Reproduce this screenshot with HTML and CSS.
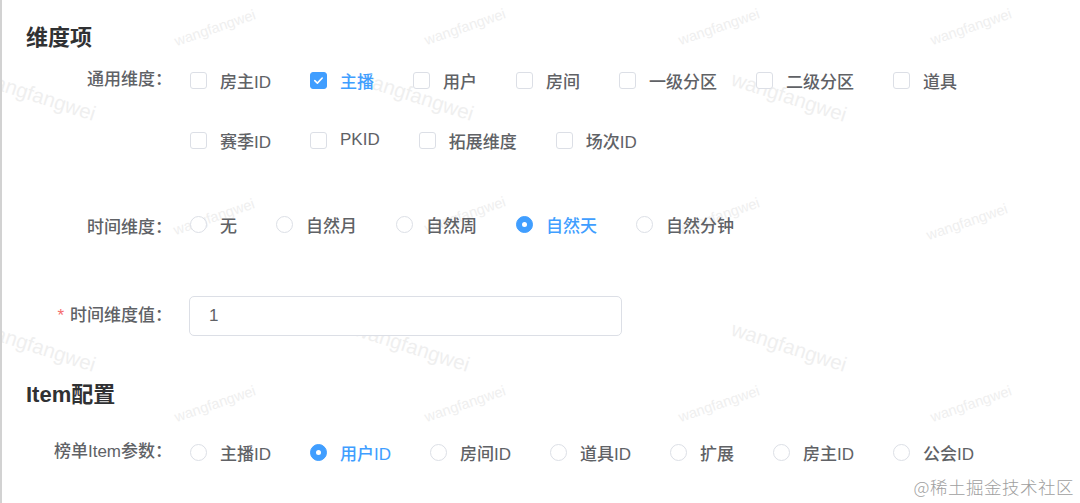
FILE: index.html
```html
<!DOCTYPE html>
<html lang="zh-CN">
<head>
<meta charset="utf-8">
<title>维度项</title>
<link rel="stylesheet" href="styles.css">
</head>
<body>
<div class="page">
  <div class="watermarks" aria-hidden="true">
    <span class="wm up" style="left:213px;top:28px">wangfangwei</span>
    <span class="wm up" style="left:463px;top:27px">wangfangwei</span>
    <span class="wm up" style="left:717px;top:27px">wangfangwei</span>
    <span class="wm up" style="left:969px;top:27px">wangfangwei</span>
    <span class="wm down" style="left:36px;top:96px">wangfangwei</span>
    <span class="wm down" style="left:414px;top:96px">wangfangwei</span>
    <span class="wm down" style="left:787px;top:97px">wangfangwei</span>
    <span class="wm up" style="left:212px;top:217px">wangfangwei</span>
    <span class="wm up" style="left:463px;top:215px">wangfangwei</span>
    <span class="wm up" style="left:717px;top:216px">wangfangwei</span>
    <span class="wm up" style="left:965px;top:222px">wangfangwei</span>
    <span class="wm down" style="left:36px;top:347px">wangfangwei</span>
    <span class="wm down" style="left:410px;top:347px">wangfangwei</span>
    <span class="wm down" style="left:787px;top:347px">wangfangwei</span>
    <span class="wm up" style="left:213px;top:404px">wangfangwei</span>
    <span class="wm up" style="left:463px;top:404px">wangfangwei</span>
    <span class="wm up" style="left:717px;top:404px">wangfangwei</span>
    <span class="wm up" style="left:969px;top:404px">wangfangwei</span>
  </div>

  <div class="content">
    <h2 class="section-title title-first">维度项</h2>

    <div class="form-item">
      <div class="label">通用维度：</div>
      <div class="group checkbox-group">
        <label class="opt"><span class="cb"></span><span class="txt">房主ID</span></label>
        <label class="opt checked"><span class="cb"><svg viewBox="0 0 17 17" width="17" height="17"><polyline points="4.8,8.6 7.4,11.1 12.2,6" fill="none" stroke="#fff" stroke-width="1.6" stroke-linecap="round" stroke-linejoin="round"/></svg></span><span class="txt">主播</span></label>
        <label class="opt"><span class="cb"></span><span class="txt">用户</span></label>
        <label class="opt"><span class="cb"></span><span class="txt">房间</span></label>
        <label class="opt"><span class="cb"></span><span class="txt">一级分区</span></label>
        <label class="opt"><span class="cb"></span><span class="txt">二级分区</span></label>
        <label class="opt"><span class="cb"></span><span class="txt">道具</span></label>
        <label class="opt"><span class="cb"></span><span class="txt">赛季ID</span></label>
        <label class="opt"><span class="cb"></span><span class="txt">PKID</span></label>
        <label class="opt"><span class="cb"></span><span class="txt">拓展维度</span></label>
        <label class="opt"><span class="cb"></span><span class="txt">场次ID</span></label>
      </div>
    </div>

    <div class="form-item row-time">
      <div class="label label-low">时间维度：</div>
      <div class="group">
        <label class="opt"><span class="rd"></span><span class="txt">无</span></label>
        <label class="opt"><span class="rd"></span><span class="txt">自然月</span></label>
        <label class="opt"><span class="rd"></span><span class="txt">自然周</span></label>
        <label class="opt checked"><span class="rd"></span><span class="txt">自然天</span></label>
        <label class="opt"><span class="rd"></span><span class="txt">自然分钟</span></label>
      </div>
    </div>

    <div class="form-item row-input">
      <div class="label"><span class="req">*</span>时间维度值：</div>
      <div class="input-wrap"><div class="input">1</div></div>
    </div>

    <h2 class="section-title title-item">Item配置</h2>

    <div class="form-item row-item">
      <div class="label">榜单Item参数：</div>
      <div class="group">
        <label class="opt"><span class="rd"></span><span class="txt">主播ID</span></label>
        <label class="opt checked"><span class="rd"></span><span class="txt">用户ID</span></label>
        <label class="opt"><span class="rd"></span><span class="txt">房间ID</span></label>
        <label class="opt"><span class="rd"></span><span class="txt">道具ID</span></label>
        <label class="opt"><span class="rd"></span><span class="txt">扩展</span></label>
        <label class="opt"><span class="rd"></span><span class="txt">房主ID</span></label>
        <label class="opt"><span class="rd"></span><span class="txt">公会ID</span></label>
      </div>
    </div>
  </div>

  <div class="credit">@稀土掘金技术社区</div>
</div>
</body>
</html>
```

FILE: styles.css
```css
* {
  box-sizing: border-box;
}

html, body {
  margin: 0;
  padding: 0;
  background: #ffffff;
}

body {
  font-family: "Liberation Sans", "Noto Sans CJK SC", sans-serif;
  color: #606266;
}

.page {
  position: relative;
  width: 1080px;
  height: 503px;
  overflow: hidden;
  border-left: 2px solid #d2d2d2;
  background: #ffffff;
}

.watermarks {
  position: absolute;
  inset: 0;
  pointer-events: none;
  z-index: 0;
}

.wm {
  position: absolute;
  white-space: nowrap;
  color: #efefef;
  font-family: "Liberation Sans", sans-serif;
  line-height: 1;
}

.wm.up {
  font-size: 14.5px;
  transform: translate(-50%, -50%) rotate(-19deg);
}

.wm.down {
  font-size: 20.5px;
  transform: translate(-50%, -50%) rotate(18deg);
}

.content {
  position: relative;
  z-index: 1;
  padding-top: 23px;
}

.section-title {
  margin: 0;
  padding-left: 24px;
  font-size: 22px;
  line-height: 30px;
  height: 30px;
  font-weight: 700;
  color: #303133;
}

.title-first {
  margin-bottom: 7px;
}

.title-item {
  margin-top: 44px;
  margin-bottom: 22px;
}

.form-item {
  display: flex;
  align-items: flex-start;
}

.label {
  flex: 0 0 188px;
  width: 188px;
  padding-right: 18px;
  text-align: right;
  font-size: 17px;
  line-height: 40px;
  height: 40px;
  font-weight: 500;
  color: #606266;
  white-space: nowrap;
}

.label-low {
  padding-top: 4px;
}

.req {
  color: #f56c6c;
  margin-right: 6px;
}

.group {
  display: flex;
  flex-wrap: wrap;
  column-gap: 39px;
  row-gap: 20px;
}

.checkbox-group {
  width: 860px;
}

.opt {
  display: flex;
  align-items: center;
  height: 40px;
  font-size: 17px;
  font-weight: 500;
  color: #606266;
  white-space: nowrap;
}

.opt .txt {
  margin-left: 13px;
}

.opt.checked .txt {
  color: #409eff;
}

.cb {
  display: flex;
  align-items: center;
  justify-content: center;
  width: 17px;
  height: 17px;
  border: 1px solid #dcdfe6;
  border-radius: 3px;
  background: #ffffff;
}

.cb svg {
  display: block;
  flex: none;
}

.opt.checked .cb {
  background: #409eff;
  border-color: #409eff;
}

.rd {
  position: relative;
  width: 17px;
  height: 17px;
  border: 1px solid #dcdfe6;
  border-radius: 50%;
  background: #ffffff;
}

.opt.checked .rd {
  background: #409eff;
  border-color: #409eff;
}

.opt.checked .rd::after {
  content: "";
  position: absolute;
  left: 50%;
  top: 50%;
  width: 5px;
  height: 5px;
  margin: -2.5px 0 0 -2.5px;
  border-radius: 50%;
  background: #ffffff;
}

.row-time {
  margin-top: 44px;
}

.row-input {
  margin-top: 52px;
}

.input-wrap {
  margin-left: -1px;
}

.input {
  width: 433px;
  height: 40px;
  border: 1px solid #dcdfe6;
  border-radius: 5px;
  background: #ffffff;
  padding-left: 19px;
  font-size: 17px;
  line-height: 38px;
  color: #606266;
}

.credit {
  position: absolute;
  right: 6px;
  bottom: 5px;
  z-index: 2;
  font-family: "Noto Sans CJK SC", sans-serif;
  font-weight: 300;
  font-size: 17.5px;
  line-height: 22px;
  color: #a0a0a0;
  letter-spacing: 0.5px;
}
```
